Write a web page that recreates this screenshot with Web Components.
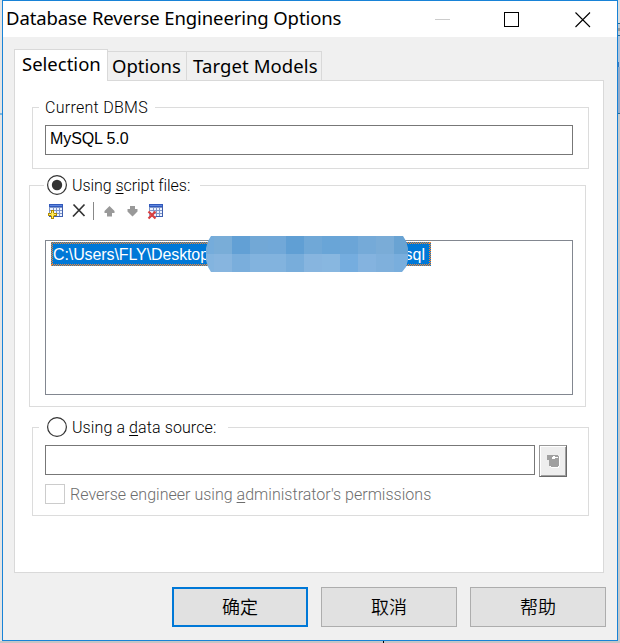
<!DOCTYPE html>
<html lang="en"><head><meta charset="utf-8"><title>Database Reverse Engineering Options</title>
<style>
html,body{margin:0;height:100%;overflow:hidden}
body{background:#d0d0d0;font-family:"Noto Sans","Noto Sans CJK SC",sans-serif;color:#000}
</style></head><body>
<desktop-backdrop><dialog-window></dialog-window></desktop-backdrop>
<script>
const define=(name,html)=>customElements.define(name,class extends HTMLElement{
  constructor(){super();this.attachShadow({mode:"open"}).innerHTML=html;}
});
define("desktop-backdrop",`<style>
:host{display:flex;box-sizing:border-box;width:620px;height:643px;padding:0 2px 2px;position:relative;background:#ddd}
svg{position:absolute;inset:0}
::slotted(*){position:relative}
</style><svg width="620" height="643" shape-rendering="crispEdges">
<rect width="2" height="643" fill="#e4e4e4"/><path d="M0 113h2v2h-2z" fill="#7bb4dc"/>
<path d="M618 0h2v23h-2z" fill="#ddd"/><path d="M618 23h2v1h-2zM618 35h2v1h-2zM618 113h2v1h-2z" fill="#246b94"/>
<path d="M618 24h2v11h-2z" fill="#c3cad0"/><path d="M618 28h2v3h-2z" fill="#999"/><path d="M618 36h2v31h-2z" fill="#b0c3d9"/><path d="M618 62h1v5h-1z" fill="#3c78bb"/><path d="M618 67h2v46h-2z" fill="#94abc9"/>
<path d="M618 114h2v529h-2z" fill="#c9c9c9"/><path d="M0 641h620v2h-620z" fill="#c6c6c6"/><path d="M383 641h1v2h-1z" fill="#000"/></svg><slot></slot>`);

define("title-bar",`<style>
:host{display:flex;align-items:center;height:36px;background:#fff;padding-left:3px;font-size:18.500px}
span{flex:1;white-space:nowrap;letter-spacing:var(--title-track,0px);padding-bottom:4px}
svg{display:block}
</style><span><slot></slot></span>
<svg width="192" height="36" fill="none"><path d="M10 18.500h15" stroke="#ccc"/><rect x="79.500" y="11.500" width="14" height="14" stroke="#000"/><path d="M150.500 11.500l14.500 14.500M165 11.500l-14.500 14.500" stroke="#000" stroke-width="1.100"/></svg>`);

define("tab-item",`<style>
:host{display:block;box-sizing:border-box;height:29px;border:1px solid #d9d9d9;border-left:0;border-bottom:0;font-size:18.500px;line-height:28px;padding-left:4px;white-space:nowrap;letter-spacing:var(--track,0)}
:host([active]){height:32px;margin-bottom:-1px;background:#fff;border-left:1px solid #d9d9d9;padding-left:7px;line-height:28px;position:relative}
</style><slot></slot>`);

define("group-box",`<style>
:host{display:block;box-sizing:border-box;border:1px solid #dcdcdc;width:557px}
.legend{display:flex;align-items:center;width:max-content;height:22px;margin-top:-12px;background:#fff;box-sizing:border-box}
</style><div class="legend" part="legend"><slot name="legend"></slot></div><slot></slot>`);

define("thin-label",`<style>
:host{display:block;padding-top:2px;font:300 16px/18px Roboto,"Liberation Sans",sans-serif;white-space:nowrap;letter-spacing:var(--track,0)}
::slotted(u){text-underline-offset:2px;text-decoration-thickness:1px}
</style><slot></slot>`);

define("text-field",`<style>
:host{display:block;box-sizing:border-box;height:30px;border:1px solid #777;background:#fff;padding-left:4px;font:16px/26px "Liberation Sans",Arial,sans-serif;letter-spacing:-.1px}
</style><slot></slot>`);

define("radio-dot",`<style>
:host{display:block;width:20px;height:20px}
.dot{display:none}:host([checked]) .dot{display:block}
</style><svg width="20" height="20"><circle cx="10" cy="10" r="9.400" fill="#fff" stroke="#333" stroke-width="1.200"/><circle class="dot" cx="10" cy="10" r="5.200" fill="#333"/></svg>`);

const table=`<path d="M1 0h14v13H1z" fill="#7f96c8"/><path d="M1 0h14v3H1z" fill="#3159bb"/><path d="M2 1h12v1H2z" fill="#5e86e0"/><path d="M14 3h1v10H1v-1h13z" fill="#3f5fae"/><path d="M2 4h3v2H2zM6 4h2v2H6zM9 4h2v2H9zM12 4h2v2h-2zM2 7h3v2H2zM6 7h2v2H6zM9 7h2v2H9zM12 7h2v2h-2zM2 10h3v2H2zM6 10h2v2H6zM9 10h2v2H9zM12 10h2v2h-2z" fill="#edf3ff"/>`;
define("file-toolbar",`<style>
:host{display:flex;height:18px}svg{display:block;overflow:visible}
</style><svg width="120" height="18">
<g transform="translate(3 2)" shape-rendering="crispEdges">${table}<path d="M3 6h3v3h3v3H6v3H3v-3H0V9h3z" fill="#b28b00"/><path d="M4 7h1v3h3v1H5v3H4v-3H1v-1h3z" fill="#fff16b"/><path d="M3 9h1v3H3zM5 9h1v3H5z" fill="#f5d83d"/></g>
<path d="M28.500 2.500l11 11.500M39.500 2.500L28 14.500" stroke="#333" stroke-width="1.700" fill="none"/><path d="M48.500 0v18" stroke="#888"/>
<g fill="#999"><path d="M64.500 4l5 5v2H67v3.500h-5V11h-2.500V9z"/><path d="M85 4h5v3h2.500v2.500l-5 5-5-5V7H85z"/></g>
<g transform="translate(103 2)" shape-rendering="crispEdges">${table}</g><path d="M104 9.500l6.500 7M110.500 9.500L104 16.500" stroke="#fff" stroke-width="3" opacity=".4"/><path d="M103.500 9.500l7 7M110.500 9.500l-7 7" stroke="#d93f40" stroke-width="2.200"/></svg>`);

const colours=["#75acdb #79add8 #62a0d5 #72a8d6 #71a8d8 #609fd4 #70a8d7 #69a5d7 #6ba5d7 #75aad8 #7aacd7 #69a3d3".split(" "),"#83b4df #87b5df #7aaedc #82b3de #82b3de #78addb #87b5df #88b7e0 #75addf #84b3df #7fb0dc #79aedd".split(" ")];
const cells=colours.map((r,j)=>r.map((c,i)=>`<path fill="${c}" d="M${i?8+(i-1)*18:0} ${j*18}h${i==0?8:i==11?14:18}v18h-${i==0?8:i==11?14:18}z"/>`).join("")).join("");
define("file-list",`<style>
:host{display:block;box-sizing:border-box;height:155px;border:1px solid #828790;padding:1px 0 0 5px;position:relative;font:16px/24px "Liberation Sans",Arial,sans-serif;color:#fff}
.row{width:380px;height:24px;background:#0078d7;position:relative;box-sizing:border-box;padding:1px 6px 0 2px;display:flex;justify-content:space-between}
.row span:first-child{letter-spacing:-.1px}
.focus{position:absolute;inset:0}
.mask{position:absolute;left:160px;top:-5px;clip-path:polygon(5px 0,197px 0,200px 5px,202px 12px,202px 24px,200px 31px,196px 36px,5px 36px,2px 31px,0 24px,0 12px,2px 5px)}
</style><div class="row"><span><slot name="start"></slot></span><span><slot name="end"></slot></span><svg class="focus" width="380" height="24" fill="none" stroke="#ff8728" stroke-dasharray="1 1"><path d="M0 .5h380M0 23.500h380M.5 0v24M379.500 0v24"/><path d="M1 1.500h378M1 22.500h378M1.500 1v22M378.500 1v22"/></svg></div>
<svg class="mask" width="202" height="36" shape-rendering="crispEdges">${cells}</svg>`);

define("browse-button",`<style>
:host{display:block;box-sizing:border-box;width:28px;height:32px;border:1px solid;border-color:#999 #696969 #696969 #999;background:#eee;box-shadow:inset 1px 1px #fff,inset -1px -1px #a0a0a0}svg{display:block}
</style><svg width="26" height="30" shape-rendering="crispEdges"><path d="M9 10h11v10h-1v2h-8v-1h-1v-7h-2v-4z" fill="#fff"/><path d="M7 9h11v1h1v10h-1v1h-7v-1H9v-6H7z" fill="#a0a0a0"/><path d="M13 10h2v1h3v1h-3v1h-3v-2h1z" fill="#fff"/></svg>`);
define("check-square",`<style>:host{display:block;box-sizing:border-box;width:20px;height:20px;border:1px solid #ccc;background:#fff}</style>`);
define("push-button",`<style>
:host{display:flex;box-sizing:border-box;width:136px;height:40px;align-items:center;justify-content:center;background:#e1e1e1;border:1px solid #adadad;font:350 18px/24px "Noto Sans CJK SC",sans-serif;padding-bottom:2px}
:host([default]){border:2px solid #0078d7}
</style><slot></slot>`);

define("dialog-window",`<style>
:host{display:flex;flex-direction:column;box-sizing:border-box;width:616px;height:641px;border:1px solid #1883d7;background:#f0f0f0}
.tabs{display:flex;align-items:flex-end;height:31px;margin:12px 0 0 11px;position:relative;z-index:1}
.panel{box-sizing:border-box;width:590px;height:493px;margin-left:11px;border:1px solid #d9d9d9;background:#fff;padding:26px 0 0 17px;display:flex;flex-direction:column}
.g1{height:62px}.g2{height:222px;margin:16px 0 0 -3px}.g3{height:89px;margin-top:20px}
.g1::part(legend){margin-left:6px;padding:0 7px 0 6px}
.g2::part(legend){margin-left:14px;padding:0 10px 0 3px}
.g3::part(legend){margin-left:6px;padding:0 12px 0 8px}
radio-dot{margin-right:5px}
.g1 text-field{margin:7px 15px 0 12px}
file-toolbar{margin:6px 0 0 15px}
file-list{margin:20px 12px 0 15px}
.source{display:flex;gap:4px;margin:7px 0 0 12px}.source text-field{width:490px}
.perm{display:flex;align-items:center;gap:5px;margin:7px 0 0 12px;color:#6d6d6d}
.actions{display:flex;gap:13px;margin:14px 0 0 169px}
</style>
<title-bar style="--title-track:-.1px">Database Reverse Engineering Options</title-bar>
<div class="tabs"><tab-item active style="width:94px">Selection</tab-item><tab-item style="width:79px">Options</tab-item><tab-item style="width:135px;padding-left:6px;--track:.1px">Target Models</tab-item></div>
<div class="panel">
<group-box class="g1"><thin-label slot="legend" style="--track:.28px">Current DBMS</thin-label><text-field>MySQL 5.0</text-field></group-box>
<group-box class="g2"><radio-dot slot="legend" checked></radio-dot><thin-label slot="legend" style="--track:-.06px">Using <u>s</u>cript files:</thin-label><file-toolbar></file-toolbar><file-list><span slot="start">C:\\Users\\FLY\\Desktop</span><span slot="end">sql</span></file-list></group-box>
<group-box class="g3"><radio-dot slot="legend"></radio-dot><thin-label slot="legend" style="--track:.1px">Using a <u>d</u>ata source:</thin-label><div class="source"><text-field></text-field><browse-button></browse-button></div><div class="perm"><check-square></check-square><thin-label style="--track:.02px">Reverse engineer using <u>a</u>dministrator's permissions</thin-label></div></group-box>
</div>
<div class="actions"><push-button default>确定</push-button><push-button>取消</push-button><push-button>帮助</push-button></div>`);
</script></body></html>
